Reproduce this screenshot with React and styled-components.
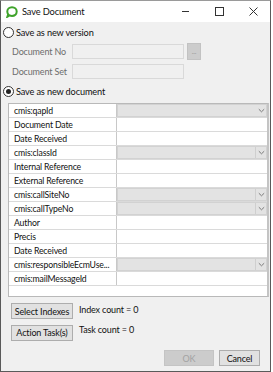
import React from "react";
import styled, { createGlobalStyle } from "styled-components";

const Global = createGlobalStyle`
  html, body { margin: 0; padding: 0; background: #ffffff; }
  body { font-family: Lato, "Open Sans", sans-serif; }
  * { box-sizing: border-box; }
`;

const Window = styled.div`
  width: 271px;
  height: 372px;
  border: 1px solid #5a5a5a;
  border-top-color: #9a9a9a;
  display: flex;
  flex-direction: column;
  background: #f0f0f0;
  font-size: 9px;
  letter-spacing: -0.15px;
  color: #1a1a1a;
  white-space: nowrap;
`;

const TitleBar = styled.div`
  height: 21px;
  background: #ffffff;
  display: flex;
  align-items: center;
  padding-left: 5px;
  flex-shrink: 0;
`;

const TitleText = styled.span`
  margin-left: 4px;
  font-size: 9.3px;
  color: #111;
`;

const TitleControls = styled.div`
  margin-left: auto;
  display: flex;
  align-items: center;
  height: 100%;
`;

const Ctrl = styled.div`
  width: 34px;
  height: 100%;
  display: flex;
  align-items: center;
  justify-content: center;
`;

const Body = styled.div`
  flex: 1;
  display: flex;
  flex-direction: column;
  padding: 3px 0 0 0;
`;

const RadioRow = styled.label`
  display: flex;
  align-items: center;
  height: 14px;
  padding-left: 2px;
  gap: 2px;
  margin-top: ${(p) => p.$mt || 0}px;
  color: #111;
  font-size: 9.2px;
`;

const RadioCircle = styled.span`
  width: 11px;
  height: 11px;
  border-radius: 50%;
  border: 1px solid #333;
  background: #fff;
  display: flex;
  align-items: center;
  justify-content: center;
  &::after {
    content: "";
    width: 5px;
    height: 5px;
    border-radius: 50%;
    background: ${(p) => (p.$checked ? "#222" : "transparent")};
  }
`;

const FieldRow = styled.div`
  display: flex;
  align-items: center;
  height: 15px;
  padding-left: 11px;
  margin-top: ${(p) => p.$mt || 0}px;
`;

const FieldLabel = styled.span`
  width: 60px;
  color: #6d6d6d;
`;

const DisabledInput = styled.div`
  width: 112px;
  height: 15px;
  border: 1px solid #d9d9d9;
  background: #f0f0f0;
`;

const DotsButton = styled.div`
  width: 14px;
  height: 17px;
  margin-left: 3px;
  background: #cccccc;
  border: 1px solid #c2c2c2;
  color: #9a9a9a;
  font-size: 7px;
  display: flex;
  align-items: center;
  justify-content: center;
  line-height: 1;
`;

const Grid = styled.div`
  margin: 5px 0 0 7px;
  width: 261px;
  height: 194px;
  background: #ffffff;
  border: 1px solid #b9b9b9;
  border-right: 2px solid #c4c4c4;
  display: flex;
  flex-direction: column;
`;

const GridRow = styled.div`
  display: grid;
  grid-template-columns: 108px 1fr;
  height: 14px;
  border-bottom: 1px solid #dadada;
`;

const GridLabel = styled.div`
  padding-left: 5px;
  border-right: 1px solid #c8c8c8;
  display: flex;
  align-items: center;
  overflow: hidden;
  font-size: 8.7px;
  color: #111;
`;

const GridValue = styled.div`
  background: #ffffff;
`;

const Combo = styled.div`
  height: 100%;
  background: #e3e3e3;
  border: 1px solid #d2d2d2;
  display: flex;
  justify-content: flex-end;
`;

const ComboArrow = styled.div`
  width: 11px;
  height: 100%;
  border-left: 1px solid ${(p) => (p.$sep ? "#cfcfcf" : "transparent")};
  display: flex;
  align-items: center;
  justify-content: center;
`;

const ActionRow = styled.div`
  display: flex;
  align-items: center;
  padding-left: 10px;
  margin-top: ${(p) => p.$mt || 0}px;
  gap: 6px;
`;

const Button = styled.div`
  width: ${(p) => p.$w}px;
  height: 16px;
  background: ${(p) => (p.$disabled ? "#cccccc" : "#e1e1e1")};
  border: 1px solid ${(p) => (p.$disabled ? "#c4c4c4" : "#adadad")};
  color: ${(p) => (p.$disabled ? "#a3a3a3" : "#111")};
  display: flex;
  align-items: center;
  justify-content: center;
`;

const CountText = styled.span`
  color: #111;
  margin-bottom: ${(p) => p.$mb || 0}px;
`;

const Footer = styled.div`
  display: flex;
  justify-content: flex-end;
  gap: 5px;
  padding-right: 10px;
  margin-top: 9px;
`;

const Chevron = () => (
  <svg width="7" height="5" viewBox="0 0 7 5">
    <path d="M0.8 1.2 L3.5 3.8 L6.2 1.2" fill="none" stroke="#7a7a7a" strokeWidth="1" />
  </svg>
);

const AppIcon = () => (
  <svg width="12" height="12" viewBox="0 0 12 12">
    <path
      d="M6 1.3 C8.8 1.3 10.7 3.2 10.7 5.6 C10.7 8 8.8 9.9 6 9.9 C5.1 9.9 4.3 9.7 3.6 9.3 L1.4 10.7 L2.2 8.4 C1.6 7.6 1.3 6.6 1.3 5.6 C1.3 3.2 3.2 1.3 6 1.3 Z"
      fill="none"
      stroke="#3fa32b"
      strokeWidth="2"
    />
  </svg>
);

const rows = [
  { label: "cmis:qapId", combo: true, sep: false },
  { label: "Document Date" },
  { label: "Date Received" },
  { label: "cmis:classId", combo: true, sep: true },
  { label: "Internal Reference" },
  { label: "External Reference" },
  { label: "cmis:callSiteNo", combo: true, sep: true },
  { label: "cmis:callTypeNo", combo: true, sep: true },
  { label: "Author" },
  { label: "Precis" },
  { label: "Date Received" },
  { label: "cmis:responsibleEcmUse...", combo: true, sep: true },
  { label: "cmis:mailMessageId" },
];

export default function App() {
  return (
    <>
      <Global />
      <Window>
        <TitleBar>
          <AppIcon />
          <TitleText>Save Document</TitleText>
          <TitleControls>
            <Ctrl>
              <svg width="9" height="9" viewBox="0 0 9 9">
                <path d="M1 4.5 H8" stroke="#333" strokeWidth="1" />
              </svg>
            </Ctrl>
            <Ctrl>
              <svg width="9" height="9" viewBox="0 0 9 9">
                <rect x="0.5" y="0.5" width="8" height="8" fill="none" stroke="#333" strokeWidth="1" />
              </svg>
            </Ctrl>
            <Ctrl>
              <svg width="9" height="9" viewBox="0 0 9 9">
                <path d="M0.5 0.5 L8.5 8.5 M8.5 0.5 L0.5 8.5" stroke="#333" strokeWidth="1" />
              </svg>
            </Ctrl>
          </TitleControls>
        </TitleBar>
        <Body>
          <RadioRow>
            <RadioCircle />
            Save as new version
          </RadioRow>
          <FieldRow $mt={5}>
            <FieldLabel>Document No</FieldLabel>
            <DisabledInput />
            <DotsButton>...</DotsButton>
          </FieldRow>
          <FieldRow $mt={5}>
            <FieldLabel>Document Set</FieldLabel>
            <DisabledInput />
          </FieldRow>
          <RadioRow $mt={5}>
            <RadioCircle $checked />
            Save as new document
          </RadioRow>
          <Grid>
            {rows.map((r, i) => (
              <GridRow key={i}>
                <GridLabel>{r.label}</GridLabel>
                {r.combo ? (
                  <Combo>
                    <ComboArrow $sep={r.sep}>
                      <Chevron />
                    </ComboArrow>
                  </Combo>
                ) : (
                  <GridValue />
                )}
              </GridRow>
            ))}
          </Grid>
          <ActionRow $mt={6}>
            <Button $w={62}>Select Indexes</Button>
            <CountText $mb={4}>Index count = 0</CountText>
          </ActionRow>
          <ActionRow $mt={5}>
            <Button $w={62}>Action Task(s)</Button>
            <CountText $mb={6}>Task count = 0</CountText>
          </ActionRow>
          <Footer>
            <Button $w={50} $disabled>OK</Button>
            <Button $w={41}>Cancel</Button>
          </Footer>
        </Body>
      </Window>
    </>
  );
}
